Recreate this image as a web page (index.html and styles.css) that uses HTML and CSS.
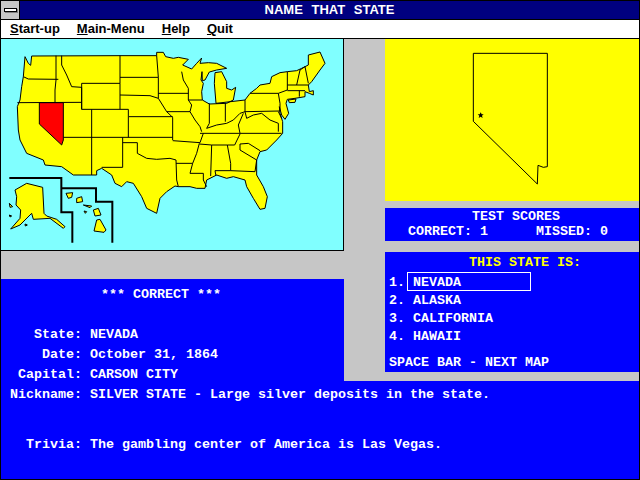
FILE: index.html
```html
<!DOCTYPE html>
<html lang="en">
<head>
  <meta charset="UTF-8">
  <title>Name That State</title>
  <link rel="stylesheet" href="styles.css">
</head>
<body>
  <div class="window">
    <div class="title-row">
      <div class="sys-btn"><span class="sys-dash"></span></div>
      <div class="title">NAME THAT STATE</div>
    </div>
    <div class="menu">
      <span><u>S</u>tart-up</span>
      <span><u>M</u>ain-Menu</span>
      <span><u>H</u>elp</span>
      <span><u>Q</u>uit</span>
    </div>

    <div class="top">
      <div class="left">
        <div class="map">
          <svg class="map-svg" viewBox="3 117 1026 633" width="342" height="211">
            <path class="land" d="M75 170 L85 190 L92 196 L95 168 L360 167 L470 167 L470 157 L490 157 L497 170 L520 175 L535 172 L565 178 L548 195 L575 207 L590 190 L605 174 L600 190 L625 188 L650 190 L680 205 L650 210 L628 216 L615 240 L607 242 L606 215 L603 240 L610 250 L605 275 L607 300 L628 312 L680 310 L700 300 L707 262 L695 270 L680 265 L680 245 L665 215 L645 218 L643 250 L648 310 L735 300 L750 280 L770 265 L780 255 L810 250 L815 230 L840 218 L862 215 L890 212 L905 205 L925 195 L925 165 L960 156 L975 190 L960 210 L935 245 L925 255 L928 275 L940 272 L940 285 L928 280 L915 275 L915 290 L885 295 L862 298 L858 310 L866 340 L855 358 L845 345 L838 320 L840 340 L848 365 L848 400 L830 420 L800 450 L780 455 L770 480 L770 525 L790 560 L802 590 L795 625 L780 628 L760 595 L740 560 L735 540 L700 530 L680 535 L650 525 L620 540 L615 565 L590 565 L570 560 L535 560 L525 558 L500 575 L480 595 L470 640 L440 625 L425 590 L400 550 L380 545 L365 560 L345 550 L335 525 L305 505 L290 512 L290 525 L220 525 L185 500 L135 495 L130 480 L80 460 L60 420 L55 390 L52 320 L60 300 L65 260 L70 230 Z"/>
            <path class="land" d="M865 300 L888 297 L885 307 L868 308 Z"/>
            <path class="red" d="M118 308 L190 308 L190 420 L185 435 L118 372 Z"/>
            <path class="lines" d="M70 230 L85 237 L175 238 M168 167 L168 240 L165 270 L165 307 M185 167 L185 195 L200 225 L215 260 L245 262 M52 308 L245 307 M245 250 L360 250 L360 328 L245 328 Z M245 262 L245 328 M360 167 L360 250 M360 232 L475 232 M470 167 L475 232 L475 295 M360 285 L450 287 L475 295 L500 335 L518 352 L518 420 M385 328 L385 350 L518 350 M360 328 L385 328 M275 328 L275 525 M385 350 L385 412 M190 412 L518 412 M368 412 L368 502 L305 502 M368 428 L412 428 L412 460 L440 475 L470 478 L510 475 L528 480 L530 540 L535 560 M518 422 L600 428 M528 490 L578 490 L590 460 L598 430 M578 490 L570 520 L610 520 L610 540 L620 560 M598 432 L635 435 L632 528 M635 435 L682 435 L692 490 L692 512 L645 512 L648 528 M682 435 L704 435 L720 402 M692 512 L765 515 L770 480 L720 450 L720 432 L745 430 L780 452 M600 400 L845 400 M600 428 L610 400 M475 280 L565 280 M500 335 L570 335 M545 215 L550 240 L565 265 L565 300 L575 315 L570 335 L585 360 L600 380 L605 395 M565 300 L607 300 M628 310 L628 370 L620 385 M676 310 L676 365 M735 300 L735 335 M620 385 L650 375 L680 370 L700 360 L720 340 L735 335 L840 333 M750 280 L835 280 L840 310 L840 333 M835 280 L862 270 L862 215 M862 255 L925 255 M862 272 L915 272 M898 272 L898 290 M890 255 L900 210 L915 200 L925 250 M735 335 L740 355 L760 345 L785 340 L810 360 L835 370 L835 395 M720 400 L715 375 L730 340 M835 335 L845 355"/>
            <path class="land" d="M45 570 L80 550 L128 562 L132 640 L140 648 L170 658 L195 680 L190 685 L150 655 L100 658 L95 640 L60 675 L32 687 L60 655 L62 630 L48 615 L50 590 Z"/>
            <path class="land" d="M28 610 L38 620 L30 622 Z M28 645 L35 648 L30 651 Z M75 672 L82 675 L76 678 Z"/>
            <path class="land" d="M198 580 L218 578 L215 592 L205 595 Z M230 595 L245 590 L248 605 L230 608 Z M250 615 L275 618 L270 623 Z M252 633 L260 635 L256 640 Z M280 630 L295 625 L303 645 L285 648 Z M290 660 L300 658 L318 690 L312 697 L282 693 Z"/>
            <path class="inset" d="M28 534 L184 534 L184 637 L217 637 L217 728 M184 565 L288 565 L288 605 L337 605 L337 728"/>
          </svg>
        </div>
        <div class="info info-top">
          <div class="banner">*** CORRECT ***</div>
          <div class="fact"><span class="fact-label">State:</span><span>NEVADA</span></div>
          <div class="fact"><span class="fact-label">Date:</span><span>October 31, 1864</span></div>
          <div class="fact"><span class="fact-label">Capital:</span><span>CARSON CITY</span></div>
        </div>
      </div>

      <div class="right">
        <div class="state-view">
          <svg class="state-svg" viewBox="3 3 759 486" width="253" height="162">
            <path class="outline" d="M268 46 L490 46 L490 386 L478 388 L462 382 L460 438 L268 250 Z"/>
            <path class="star" d="M290 223 L293 229 L299 229 L294 233 L296 240 L290 236 L284 240 L286 233 L281 229 L287 229 Z"/>
          </svg>
        </div>
        <div class="scores">
          <div class="scores-head">TEST SCORES</div>
          <div class="scores-row">CORRECT: 1      MISSED: 0</div>
        </div>
        <div class="quiz">
          <div class="quiz-head">THIS STATE IS:</div>
          <ol class="choices">
            <li class="choice"><span class="choice-num">1.</span><span class="choice-name selected">NEVADA</span></li>
            <li class="choice"><span class="choice-num">2.</span><span class="choice-name">ALASKA</span></li>
            <li class="choice"><span class="choice-num">3.</span><span class="choice-name">CALIFORNIA</span></li>
            <li class="choice"><span class="choice-num">4.</span><span class="choice-name">HAWAII</span></li>
          </ol>
          <div class="quiz-hint">SPACE BAR - NEXT MAP</div>
        </div>
      </div>
    </div>

    <div class="info info-bottom">
      <div class="fact"><span class="fact-label">Nickname:</span><span>SILVER STATE - Large silver deposits in the state.</span></div>
      <div class="fact trivia"><span class="fact-label">Trivia:</span><span>The gambling center of America is Las Vegas.</span></div>
    </div>
  </div>
</body>
</html>
```

FILE: styles.css
```css
* {
  margin: 0;
  padding: 0;
  box-sizing: border-box;
}

body {
  margin: 0;
  width: 640px;
  height: 480px;
  overflow: hidden;
  font-family: "Liberation Mono", monospace;
  font-weight: bold;
  font-size: 13.33px;
  color: #fff;
}

.window {
  width: 640px;
  height: 480px;
  border: 1px solid #000;
  background: #c6c6c6;
  display: flex;
  flex-direction: column;
}

/* title bar */
.title-row {
  height: 19px;
  display: flex;
  border-bottom: 1px solid #000;
  background: #000080;
  flex: none;
}

.sys-btn {
  width: 19px;
  background: #c6c6c6;
  border-right: 1px solid #000;
  display: flex;
  align-items: center;
  justify-content: center;
}

.sys-dash {
  width: 13px;
  height: 4px;
  background: #fff;
  border: 1px solid #000;
  box-shadow: 1px 1px 0 #808080;
}

.title {
  flex: 1;
  text-align: center;
  font-family: "Liberation Sans", sans-serif;
  font-size: 13px;
  line-height: 18px;
  word-spacing: 5px;
}

/* menu */
.menu {
  height: 19px;
  background: #fff;
  color: #000;
  border-bottom: 1px solid #000;
  display: flex;
  gap: 17px;
  padding-left: 9px;
  font-family: "Liberation Sans", sans-serif;
  font-size: 13px;
  line-height: 18px;
  flex: none;
}

.top {
  display: flex;
  height: 342px;
  flex: none;
}

.left {
  width: 343px;
  display: flex;
  flex-direction: column;
}

.map {
  height: 212px;
  border-right: 1px solid #000;
  border-bottom: 1px solid #000;
  background: #80ffff;
}

.map-svg,
.state-svg {
  display: block;
}

.land {
  fill: #ffff00;
  stroke: #000;
  stroke-width: 3;
}

.red {
  fill: #ff0000;
  stroke: #000;
  stroke-width: 3;
}

.lines,
.outline {
  fill: none;
  stroke: #000;
  stroke-width: 3;
}

.inset {
  fill: none;
  stroke: #000;
  stroke-width: 6;
}

.star {
  fill: #000;
}

/* info text */
.info {
  background: #0000ff;
  line-height: 20px;
}

.info-top {
  margin-top: 28px;
  height: 102px;
  padding: 6px 0 0 9px;
}

.banner {
  padding-left: 91px;
  margin-bottom: 20px;
}

.fact {
  display: flex;
  gap: 8px;
  white-space: nowrap;
}

.fact-label {
  width: 72px;
  text-align: right;
}

.info-bottom {
  flex: 1;
  padding: 4px 0 0 9px;
}

.trivia {
  margin-top: 30px;
}

/* right column */
.right {
  margin-left: 41px;
  width: 254px;
  display: flex;
  flex-direction: column;
}

.state-view {
  height: 162px;
  background: #ffff00;
}

.scores {
  margin-top: 7px;
  height: 33px;
  background: #0000ff;
  line-height: 15px;
  padding-top: 1px;
}

.scores-head {
  padding-left: 87px;
}

.scores-row {
  padding-left: 23px;
  white-space: pre;
}

.quiz {
  margin-top: 11px;
  height: 120px;
  background: #0000ff;
  padding: 2px 0 0 4px;
}

.quiz-head {
  color: #ffff00;
  padding-left: 80px;
  line-height: 18px;
}

.choices {
  list-style: none;
  margin-top: 2px;
}

.choice {
  height: 18px;
  display: flex;
  line-height: 18px;
}

.choice-num {
  width: 18px;
}

.choice-name {
  width: 124px;
  padding-left: 5px;
  border: 1px solid transparent;
  line-height: 16px;
}

.selected {
  border-color: #fff;
  height: 19px;
  margin-top: -2px;
  padding-top: 1px;
  line-height: 18px;
}

.quiz-hint {
  margin-top: 8px;
  line-height: 18px;
}
```
